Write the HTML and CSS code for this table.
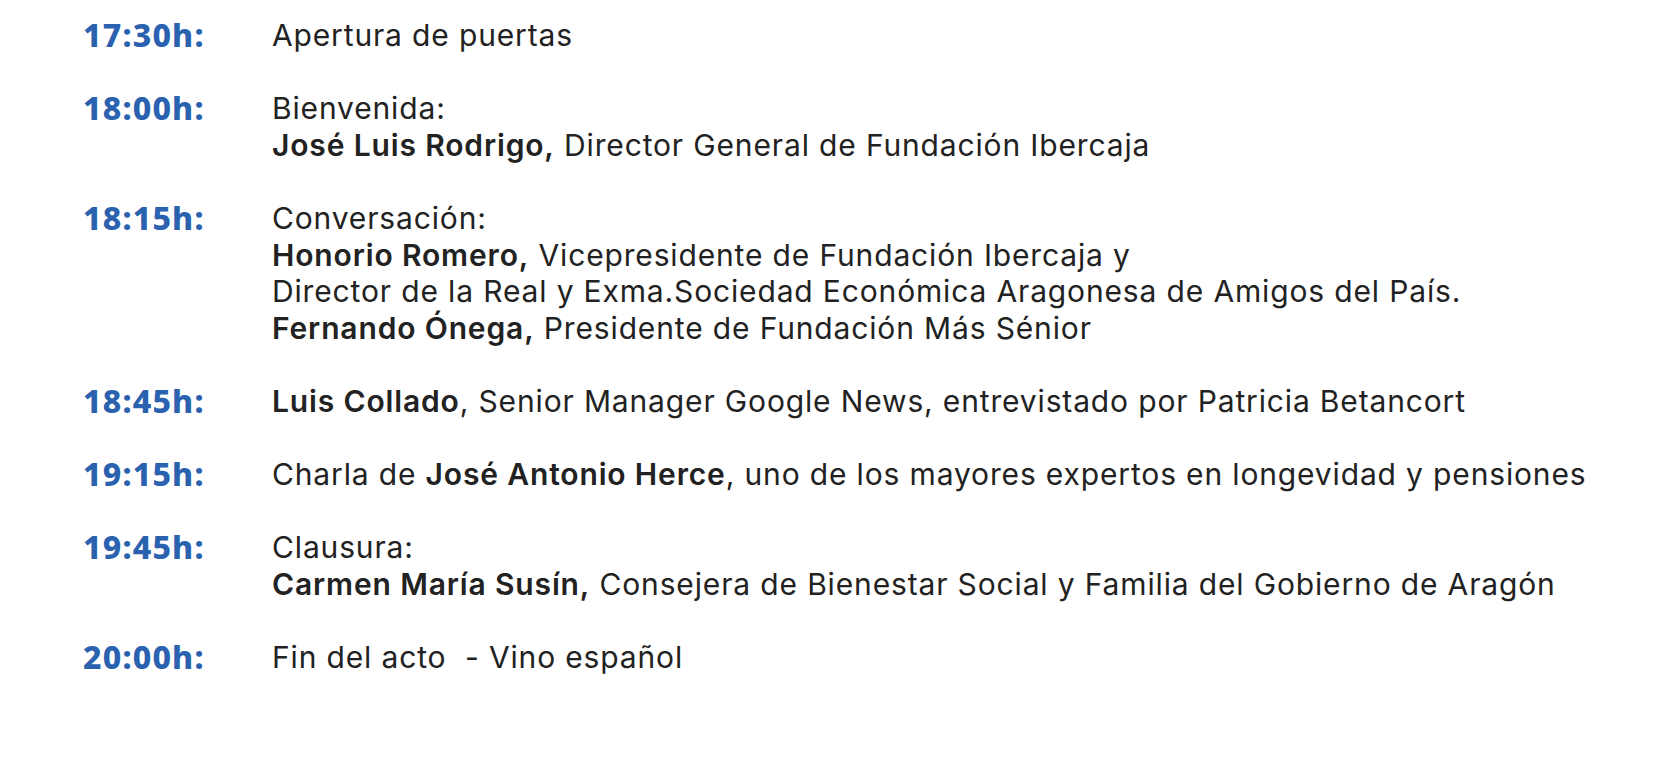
FILE: index.html
```html
<!DOCTYPE html>
<html lang="es">
<head>
<meta charset="utf-8">
<title>Programa</title>
<link rel="stylesheet" href="styles.css">
</head>
<body>
<main class="program">
  <div class="row">
    <div class="time">17:30h:</div>
    <div class="desc"><p>Apertura de puertas</p></div>
  </div>
  <div class="row">
    <div class="time">18:00h:</div>
    <div class="desc">
      <p>Bienvenida:</p>
      <p><b>José Luis Rodrigo,</b> Director General de Fundación Ibercaja</p>
    </div>
  </div>
  <div class="row">
    <div class="time">18:15h:</div>
    <div class="desc">
      <p>Conversación:</p>
      <p><b>Honorio Romero,</b> Vicepresidente de Fundación Ibercaja y</p>
      <p>Director de la Real y Exma.Sociedad Económica Aragonesa de Amigos del País.</p>
      <p><b>Fernando Ónega,</b> Presidente de Fundación Más Sénior</p>
    </div>
  </div>
  <div class="row">
    <div class="time">18:45h:</div>
    <div class="desc"><p><b>Luis Collado</b>, Senior Manager Google News, entrevistado por Patricia Betancort</p></div>
  </div>
  <div class="row">
    <div class="time">19:15h:</div>
    <div class="desc"><p>Charla de <b>José Antonio Herce</b>, uno de los mayores expertos en longevidad y pensiones</p></div>
  </div>
  <div class="row">
    <div class="time">19:45h:</div>
    <div class="desc">
      <p>Clausura:</p>
      <p><b>Carmen María Susín,</b> Consejera de Bienestar Social y Familia del Gobierno de Aragón</p>
    </div>
  </div>
  <div class="row">
    <div class="time">20:00h:</div>
    <div class="desc"><p>Fin del acto&nbsp; - Vino español</p></div>
  </div>
</main>
</body>
</html>
```
FILE: styles.css
```css
html, body {
  margin: 0;
  padding: 0;
  background: #ffffff;
}
body {
  font-family: Inter, "Open Sans", sans-serif;
  color: #222222;
}
.program {
  display: flex;
  flex-direction: column;
  gap: 36.6px;
  padding: 17px 0 0 83px;
  font-size: 30px;
  line-height: 36.6px;
  letter-spacing: 0.85px;
}
.row {
  display: grid;
  grid-template-columns: 189px auto;
}
.time {
  color: #2a62b0;
  font-family: "Noto Sans", sans-serif;
  font-weight: 800;
  font-size: 32px;
  letter-spacing: 1.2px;
}
.desc p {
  margin: 0;
  white-space: nowrap;
}
.desc b {
  font-weight: 600;
}
```
